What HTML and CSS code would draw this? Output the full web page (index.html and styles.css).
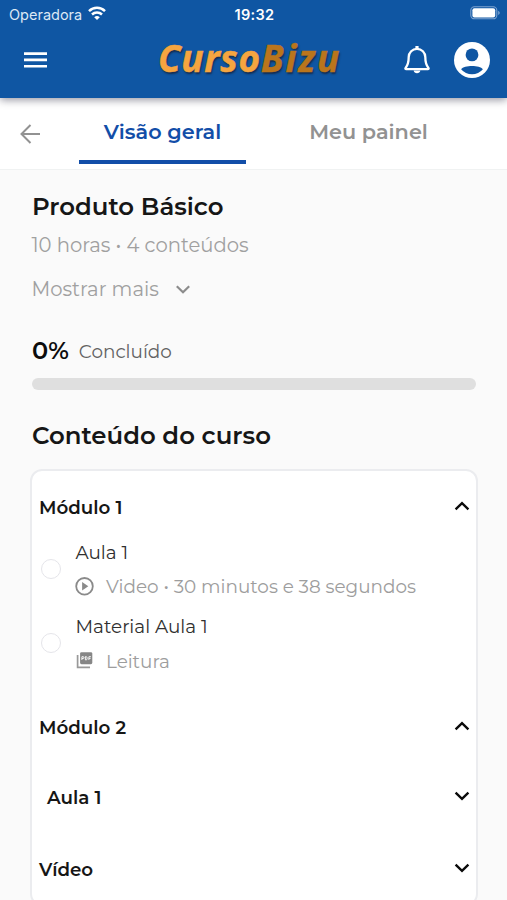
FILE: index.html
```html
<!DOCTYPE html>
<html lang="pt-BR">
<head>
<meta charset="utf-8">
<meta name="viewport" content="width=device-width, initial-scale=1">
<title>CursoBizu</title>
<link rel="stylesheet" href="styles.css">
</head>
<body>
<header class="header">
  <div class="status">
    <div class="carrier"><span class="operator">Operadora</span>
      <svg class="wifi" width="18" height="14" viewBox="0 0 18 14" fill="none" stroke="#fff" stroke-width="2.5"><path d="M1 5.1a11.5 11.5 0 0 1 16 0M4 8.5a7.3 7.3 0 0 1 10 0"/><path d="M9 14 6.2 11.2a4.1 4.1 0 0 1 5.6 0z" fill="#fff" stroke="none"/></svg>
    </div>
    <span class="clock">19:32</span>
    <svg class="battery" width="30" height="14" viewBox="0 0 30 14"><rect x=".8" y=".8" width="26" height="12" rx="3.6" fill="none" stroke="#7ea3d0" stroke-width="1.1"/><rect x="2.4" y="2.2" width="22.8" height="9.2" rx="2" fill="#fff"/><path d="M28.2 4.7c2 .8 2 3.4 0 4.2z" fill="#7ea3d0"/></svg>
  </div>
  <div class="appbar">
    <svg class="menu" width="24" height="18" viewBox="0 0 24 18" fill="#fff"><path d="M0 1.2h23v2.7H0zM0 7.6h23v2.7H0zM0 13.9h23v2.7H0z"/></svg>
    <div class="logo"><span class="logo-a">Curso</span><span class="logo-b">Bizu</span></div>
    <div class="actions">
      <svg width="28" height="32" viewBox="0 0 28 32"><path d="M2.6 23.9C5.3 20.7 5.7 18.5 5.7 13.1a8.3 8.3 0 0 1 16.6 0c0 5.4.4 7.6 3.1 10.8.5.7.2 1.3-.6 1.3H3.2c-.8 0-1.1-.6-.6-1.3z" fill="none" stroke="#fff" stroke-width="2.3" stroke-linejoin="round"/><path d="M12.4 1.9h3.2v3.2h-3.2zM10.6 26.5h6.8c-.4 1.7-1.6 2.7-3.4 2.7s-3-1-3.4-2.7z" fill="#fff"/></svg>
      <svg width="36" height="36" viewBox="0 0 36 36"><circle cx="18" cy="18" r="18" fill="#fff"/><circle cx="18" cy="12.9" r="6.4" fill="#0f56a3"/><path d="M7.1 27.2c3.1-4.4 18.7-4.4 21.8 0a14.2 14.2 0 0 1-21.8 0z" fill="#0f56a3"/></svg>
    </div>
  </div>
</header>
<nav class="tabs">
  <svg class="back" width="20" height="20" viewBox="0 0 20 20" fill="none" stroke="#929292" stroke-width="2"><path d="M20 10H2M10.5 1 1.5 10l9 9"/></svg>
  <a class="tab active">Visão geral</a>
  <a class="tab">Meu painel</a>
</nav>
<main class="main">
  <h1 class="title">Produto Básico</h1>
  <p class="meta">10 horas • 4 conteúdos</p>
  <div class="more"><span>Mostrar mais</span>
    <svg width="14" height="9" viewBox="0 0 14 9" fill="none" stroke="#8c8c8c" stroke-width="2.2"><path d="m.8 1.2 6.2 6 6.2-6"/></svg>
  </div>
  <div class="progress"><strong>0%</strong><span class="done">Concluído</span></div>
  <div class="bar"></div>
  <h2 class="subtitle">Conteúdo do curso</h2>
  <section class="card">
    <div class="row r1"><span>Módulo 1</span><svg class="chev" width="16" height="10" viewBox="0 0 16 10"><path d="m1.6 8.3 6.4-6.2 6.4 6.2"/></svg></div>
    <div class="lesson">
      <i class="check"></i>
      <div class="info">
        <div class="name">Aula 1</div>
        <div class="detail"><svg width="20" height="20" viewBox="0 0 20 20"><circle cx="10.5" cy="9.3" r="8.3" fill="none" stroke="#8a8a8a" stroke-width="1.8"/><path d="M8.1 5.1v8.4l6.2-4.2z" fill="#8a8a8a"/></svg><span>Video • 30 minutos e 38 segundos</span></div>
      </div>
    </div>
    <div class="lesson">
      <i class="check"></i>
      <div class="info">
        <div class="name">Material Aula 1</div>
        <div class="detail"><svg width="20" height="20" viewBox="0 0 20 20"><path d="M3.6 4v12.4H16" fill="none" stroke="#999" stroke-width="1.7"/><rect x="6.1" y="1.2" width="12.2" height="12" rx="1.4" fill="#868686"/><path d="M7.9 9V5.7H9q1 0 1 .9t-1 .9H7.9M11.4 5.6v3.3h.7q1 0 1-1V6.7q0-1-1-1zM14.9 9V5.7h2M14.9 7.4h1.7" fill="none" stroke="#fff" stroke-width=".9"/></svg><span>Leitura</span></div>
      </div>
    </div>
    <div class="row r2"><span>Módulo 2</span><svg class="chev" width="16" height="10" viewBox="0 0 16 10"><path d="m1.6 8.3 6.4-6.2 6.4 6.2"/></svg></div>
    <div class="row r3"><span>Aula 1</span><svg class="chev" width="16" height="10" viewBox="0 0 16 10"><path d="m1.6 1.7 6.4 6.2 6.4-6.2"/></svg></div>
    <div class="row r4"><span>Vídeo</span><svg class="chev" width="16" height="10" viewBox="0 0 16 10"><path d="m1.6 1.7 6.4 6.2 6.4-6.2"/></svg></div>
  </section>
</main>
</body>
</html>
```
FILE: styles.css
```css
* { box-sizing: border-box; }
body { margin: 0; height: 900px; overflow: hidden; background: #fafafa; font-family: Montserrat, Inter, sans-serif; color: #161616; white-space: nowrap; }
h1, h2, p { margin: 0; }
svg { display: block; flex: none; }
.header { position: relative; height: 98px; background: #0f56a3; box-shadow: 0 2px 8px rgba(0, 0, 30, .42); }
.status { display: grid; grid-template-columns: 1fr auto 1fr; align-items: center; height: 28px; padding: 0 7px 0 9px; color: #fff; font-family: Inter, sans-serif; font-size: 14.5px; }
.carrier { display: flex; align-items: center; gap: 6px; }
.operator { color: #dce8f5; letter-spacing: 0; }
.wifi { margin-top: -3px; }
.clock { font-weight: 600; font-size: 14.5px; letter-spacing: .35px; }
.battery { justify-self: end; margin-top: -2px; }
.appbar { display: grid; grid-template-columns: 134px 1fr auto; align-items: center; height: 64px; padding: 0 17px 0 24px; }
.logo { margin-top: -4px; font: italic 700 37px/40px "Open Sans", sans-serif; text-shadow: 1px 2px 2px rgba(20, 30, 50, .75); -webkit-text-stroke-width: .5px; }
.logo-a { color: #f5a540; letter-spacing: .6px; }
.logo-b { color: #ba751c; letter-spacing: 1.8px; }
.actions { display: flex; align-items: center; gap: 23px; }
.tabs { display: flex; height: 72px; padding-left: 20px; background: #fff; border-bottom: 1px solid #f0f2f2; }
.back { margin: 26px 39px 0 0; }
.tab { width: 167px; height: 66px; padding-top: 19px; margin-right: 39px; border-bottom: 4px solid transparent; text-align: center; font-size: 20.8px; line-height: 30px; font-weight: 600; color: #929292; }
.tab.active { color: #124ea8; border-color: #124ea8; }
.tab + .tab { margin-right: 0; }
.main { padding: 20px 29px 0 30px; }
.title, .subtitle { padding-left: 2px; font-size: 24.4px; line-height: 32px; font-weight: 600; }
.meta, .more { padding-left: 1.5px; font-size: 19.6px; line-height: 24px; color: #a0a0a0; }
.meta { margin-top: 11px; }
.more { display: flex; align-items: center; gap: 17.5px; margin-top: 20px; }
.progress { display: flex; align-items: center; gap: 10px; height: 30px; margin-top: 34px; padding-left: 2px; }
.progress strong { font-size: 24px; font-weight: 600; color: #0c0c0c; }
.done { font-size: 18.4px; padding-top: 2px; color: #626262; }
.bar { height: 12px; margin: 13px 2px 0 1.5px; border-radius: 6px; background: #dfdfdf; }
.subtitle { margin-top: 29px; }
.card { height: 437px; margin-top: 18px; border: 2px solid #ebecef; border-radius: 12px; background: #fff; padding: 21px 6px 0 7px; }
.row { display: flex; align-items: center; justify-content: space-between; height: 30px; font-size: 18.3px; font-weight: 600; }
.chev { margin-top: -2px; }
.chev path { fill: none; stroke: #0a0a0a; stroke-width: 2.4; }
.lesson { display: flex; align-items: center; height: 74.5px; gap: 14.5px; padding-left: 2px; }
.r1 + .lesson { margin-top: 12px; }
.check { width: 20px; height: 20px; margin-top: -5px; border: 1.5px solid #e5e5ea; border-radius: 50%; flex: none; }
.name { padding-top: 1px; font-size: 18.4px; line-height: 30px; color: #303030; }
.detail { display: flex; align-items: center; gap: 12.5px; height: 38px; margin-left: -2px; font-size: 18.4px; color: #9d9d9d; }
.r2 { margin-top: 29px; }
.r3 { margin-top: 40px; padding-left: 8px; }
.r4 { margin-top: 42px; }
```
